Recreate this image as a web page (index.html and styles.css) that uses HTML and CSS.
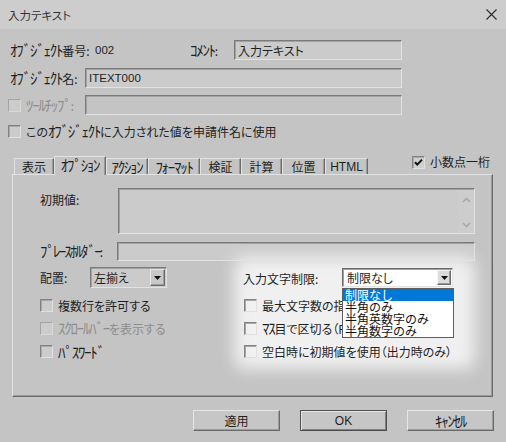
FILE: index.html
```html
<!DOCTYPE html>
<html lang="ja">
<head>
<meta charset="utf-8">
<title>入力テキスト</title>
<link rel="stylesheet" href="styles.css">
</head>
<body>
<div class="titlebar">
  <span class="title">入力テキスト</span>
  <svg class="close" width="11" height="11" viewBox="0 0 11 11"><path d="M0.5 0.5L10.5 10.5M10.5 0.5L0.5 10.5" stroke="#2b2b2b" stroke-width="1.1" fill="none"/></svg>
</div>
<div class="main">
  <div class="row">
    <span class="l-no"><span class="hk">ｵﾌﾞｼﾞｪｸﾄ</span>番号:</span>
    <span class="val">002</span>
    <span class="l-cmt"><span class="hk">ｺﾒﾝﾄ</span>:</span>
    <div class="field f-cmt">入力テキスト</div>
  </div>
  <div class="row r2">
    <span class="l-name"><span class="hk">ｵﾌﾞｼﾞｪｸﾄ</span>名:</span>
    <div class="field f-name">ITEXT000</div>
  </div>
  <div class="row r3">
    <div class="check-lbl disabled"><span class="cb dis"></span><span><span class="hk">ﾂｰﾙﾁｯﾌﾟ</span>:</span></div>
    <div class="field f-tip"></div>
  </div>
  <div class="row r4">
    <div class="check-lbl wide"><span class="cb"></span><span>この<span class="hk">ｵﾌﾞｼﾞｪｸﾄ</span>に入力された値を申請件名に使用</span></div>
  </div>
  <div class="tabrow">
    <div class="tab t1">表示</div>
    <div class="tab active t2"><span class="hk">ｵﾌﾟｼｮﾝ</span></div>
    <div class="tab t3"><span class="hk">ｱｸｼｮﾝ</span></div>
    <div class="tab t4"><span class="hk">ﾌｫｰﾏｯﾄ</span></div>
    <div class="tab t5">検証</div>
    <div class="tab t6">計算</div>
    <div class="tab t7">位置</div>
    <div class="tab t8 latin">HTML</div>
    <div class="decimal"><span class="cb checked"><svg width="11" height="11" viewBox="0 0 11 11"><path d="M2 5.2L4.3 7.6L9 2.6" stroke="#111" stroke-width="2" fill="none"/></svg></span><span>小数点一桁</span></div>
  </div>
  <div class="panel">
    <div class="glow"></div>
    <div class="ra">
      <span class="l-init">初期値:</span>
      <div class="field textarea">
        <div class="scroll">
          <svg width="9" height="6" viewBox="0 0 9 6"><path d="M1 5L4.5 1.5L8 5" stroke="#a9a9a9" stroke-width="1.6" fill="none"/></svg>
          <svg width="9" height="6" viewBox="0 0 9 6"><path d="M1 1L4.5 4.5L8 1" stroke="#a9a9a9" stroke-width="1.6" fill="none"/></svg>
        </div>
      </div>
    </div>
    <div class="rb">
      <span class="l-ph"><span class="hk">ﾌﾟﾚｰｽﾎﾙﾀﾞｰ</span>:</span>
      <div class="field f-ph"></div>
    </div>
    <div class="rc">
      <span class="l-align">配置:</span>
      <div class="field sel">
        <span>左揃え</span>
        <span class="dd"><svg width="7" height="4" viewBox="0 0 7 4"><path d="M0 0H7L3.5 4Z" fill="#111"/></svg></span>
      </div>
      <div class="limit">
        <span class="l-limit">入力文字制限:</span>
        <div class="combo">
          <div class="field sel2">
            <span>制限なし</span>
            <span class="dd dd2"><svg width="7" height="4" viewBox="0 0 7 4"><path d="M0 0H7L3.5 4Z" fill="#111"/></svg></span>
          </div>
          <ul class="dlist">
            <li class="on">制限なし</li>
            <li>半角のみ</li>
            <li>半角英数字のみ</li>
            <li>半角数字のみ</li>
          </ul>
        </div>
      </div>
    </div>
    <div class="checks">
      <div class="ck"><span class="cb"></span><span>複数行を許可する</span></div>
      <div class="ck"><span class="cb"></span><span>最大文字数の指定</span></div>
      <div class="ck disabled"><span class="cb dis"></span><span><span class="hk">ｽｸﾛｰﾙﾊﾞｰ</span>を表示する</span></div>
      <div class="ck"><span class="cb"></span><span><span class="hk">ﾏｽ</span>目で区切る（FS）</span></div>
      <div class="ck"><span class="cb"></span><span class="hk">ﾊﾟｽﾜｰﾄﾞ</span></div>
      <div class="ck"><span class="cb"></span><span>空白時に初期値を使用（出力時のみ）</span></div>
    </div>
  </div>
  <div class="buttons">
    <div class="btn">適用</div>
    <div class="btn default latin">OK</div>
    <div class="btn"><span class="hk">ｷｬﾝｾﾙ</span></div>
  </div>
</div>
</body>
</html>
```

FILE: styles.css
```css
* { box-sizing: border-box; }
html, body { margin: 0; padding: 0; }
body {
  width: 506px;
  height: 442px;
  overflow: hidden;
  background: #c4c4c4;
  font-family: "Noto Sans CJK JP", sans-serif;
  font-size: 12px;
  line-height: 14px;
  color: #1f1f1f;
  font-feature-settings: "palt";
}
.latin { font-family: "Liberation Sans", "Noto Sans CJK JP", sans-serif; }
.hk { font-size: 15px; letter-spacing: -1.3px; font-feature-settings: normal; }
.l-ph .hk { letter-spacing: -1.9px; }

.titlebar {
  height: 29px;
  background: #cdcdcd;
  display: flex;
  align-items: center;
  justify-content: space-between;
  padding: 0 9px 0 8px;
}
.title { font-size: 11.5px; color: #333; }
.close { display: block; }

.main { padding: 11px 10px 0 10px; }
.row { display: flex; align-items: center; height: 20px; }
.r2 { margin-top: 8px; }
.r3 { margin-top: 7px; margin-left: -2px; }
.r4 { margin-top: 7px; margin-left: -2px; height: 18px; }

.l-no { width: 85px; white-space: nowrap; }
.val { width: 95px; font-family: "Liberation Sans", sans-serif; font-size: 11.5px; }
.l-cmt { width: 44px; }
.l-name { width: 75px; white-space: nowrap; }

.field {
  height: 20px;
  border: 1px solid;
  border-color: #7a7a7a #e2e2e2 #e2e2e2 #7a7a7a;
  box-shadow: inset 1px 1px 0 #a2a2a2;
  background: rgba(255, 255, 255, 0.13);
  padding: 1px 0 0 3px;
  line-height: 17px;
  white-space: nowrap;
  overflow: hidden;
}
.f-cmt { width: 168px; }
.f-name { width: 317px; font-family: "Liberation Sans", sans-serif; font-size: 11.5px; }
.f-tip { width: 317px; background: transparent; }

.check-lbl { display: flex; align-items: center; width: 77px; white-space: nowrap; }
.check-lbl.wide { width: auto; }
.cb {
  width: 13px;
  height: 13px;
  flex: none;
  border: 1px solid;
  border-color: #828282 #e0e0e0 #e0e0e0 #828282;
  box-shadow: inset 1px 1px 0 #a8a8a8;
  background: rgba(255, 255, 255, 0.14);
  margin-right: 5px;
  display: flex;
  align-items: center;
  justify-content: center;
}
.cb.dis { border-color: #a4a4a4 #d8d8d8 #d8d8d8 #a4a4a4; box-shadow: none; }
.cb svg { display: block; }
.disabled { color: #8d8d8d; }

.tabrow {
  display: flex;
  align-items: flex-end;
  height: 18px;
  margin-top: 16px;
  padding-left: 4px;
}
.tab {
  height: 16px;
  border-left: 1px solid #e2e2e2;
  border-top: 1px solid #e2e2e2;
  border-right: 1px solid #6c6c6c;
  box-shadow: inset -1px 0 0 #9a9a9a;
  display: flex;
  align-items: center;
  justify-content: center;
  white-space: nowrap;
}
.tab.active {
  height: 19px;
  margin-bottom: -1px;
  position: relative;
  z-index: 2;
  background: #c4c4c4;
  padding-bottom: 2px;
}
.t1 { width: 40px; }
.t2 { width: 52px; }
.t3 { width: 42px; }
.t4 { width: 52px; }
.t5 { width: 41px; }
.t6 { width: 41px; }
.t7 { width: 43px; }
.t8 { width: 43px; font-size: 12px; }
.decimal {
  display: flex;
  align-items: center;
  align-self: flex-start;
  margin-top: -1px;
  margin-left: 44px;
}
.decimal .cb { background: #d0d0d0; }

.panel {
  position: relative;
  z-index: 0;
  margin-left: 2px;
  width: 481px;
  height: 223px;
  border: 1px solid;
  border-color: #e2e2e2 #6a6a6a #6a6a6a #e2e2e2;
  box-shadow: inset -1px -1px 0 #999;
  padding: 13px 0 0 27px;
}
.glow {
  position: absolute;
  z-index: -1;
  left: 221px;
  top: 82px;
  width: 241px;
  height: 112px;
  border-radius: 10px;
  background: rgba(255, 255, 255, 0.74);
  filter: blur(8px);
}

.ra { display: flex; align-items: flex-start; }
.l-init { width: 78px; padding-top: 5px; }
.textarea {
  width: 357px;
  height: 46px;
  display: flex;
  justify-content: flex-end;
  padding: 1px 0 0 0;
}
.scroll {
  width: 16px;
  height: 100%;
  display: flex;
  flex-direction: column;
  justify-content: space-between;
  align-items: center;
  padding: 7px 0 5px;
  background: rgba(255, 255, 255, 0.05);
}
.scroll svg { display: block; }

.rb { display: flex; align-items: center; margin-top: 8px; height: 19px; }
.l-ph { width: 77px; white-space: nowrap; }
.f-ph { width: 358px; height: 19px; }

.rc { display: flex; align-items: center; margin-top: 6px; height: 21px; }
.l-align { width: 50px; }
.sel {
  width: 77px;
  height: 21px;
  display: flex;
  align-items: center;
  justify-content: space-between;
  padding: 0 1px 0 3px;
}
.dd {
  width: 15px;
  height: 17px;
  border: 1px solid;
  border-color: #e8e8e8 #6a6a6a #6a6a6a #e8e8e8;
  box-shadow: inset -1px -1px 0 #9c9c9c;
  background: #c8c8c8;
  display: flex;
  align-items: center;
  justify-content: center;
}
.dd svg { display: block; }
.limit { display: flex; align-items: center; margin-left: 76px; }
.l-limit { width: 99px; padding-top: 3px; }
.combo { position: relative; width: 111px; height: 19px; }
.sel2 {
  width: 111px;
  height: 19px;
  background: #fff;
  border-color: #6a6a6a #e4e4e4 #e4e4e4 #6a6a6a;
  box-shadow: inset 1px 1px 0 #a0a0a0;
  display: flex;
  align-items: center;
  justify-content: space-between;
  padding: 0 1px 0 4px;
  line-height: 14px;
}
.dd2 { width: 14px; height: 15px; background: #dcdcdc; border-color: #f4f4f4 #6a6a6a #6a6a6a #f4f4f4; }
.dlist {
  position: absolute;
  left: 0;
  top: 20px;
  width: 112px;
  margin: 0;
  padding: 0;
  list-style: none;
  border: 1px solid #5e5e5e;
  background: #fff;
  font-size: 12px;
  line-height: 12px;
  font-feature-settings: normal;
  color: #111;
  z-index: 3;
}
.dlist li { height: 12px; padding-left: 2px; white-space: nowrap; }
.dlist li.on { background: #0078d7; color: #fff; }

.checks {
  display: grid;
  grid-template-columns: 204px 1fr;
  grid-auto-rows: 23px;
  margin-top: 6px;
}
.ck { display: flex; align-items: center; white-space: nowrap; }

.buttons {
  display: flex;
  justify-content: flex-end;
  gap: 20px;
  margin-top: 13px;
  margin-right: 2px;
}
.btn {
  width: 87px;
  height: 21px;
  border: 1px solid;
  border-color: #e6e6e6 #6a6a6a #6a6a6a #e6e6e6;
  box-shadow: inset -1px -1px 0 #9c9c9c;
  background: #c6c6c6;
  display: flex;
  align-items: center;
  justify-content: center;
}
.btn.default {
  border-color: #4e4e4e;
  box-shadow: inset 1px 1px 0 #e6e6e6, inset -1px -1px 0 #808080;
}
```
